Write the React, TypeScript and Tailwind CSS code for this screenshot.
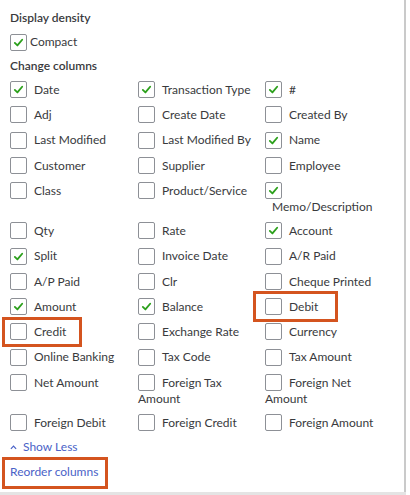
import React from 'react';

type Col = { label: string; checked?: boolean; mark?: 'credit' | 'debit' };

const columns: Col[] = [
  { label: 'Date', checked: true },
  { label: 'Transaction Type', checked: true },
  { label: '#', checked: true },
  { label: 'Adj' },
  { label: 'Create Date' },
  { label: 'Created By' },
  { label: 'Last Modified' },
  { label: 'Last Modified By' },
  { label: 'Name', checked: true },
  { label: 'Customer' },
  { label: 'Supplier' },
  { label: 'Employee' },
  { label: 'Class' },
  { label: 'Product/Service' },
  { label: 'Memo/Description', checked: true },
  { label: 'Qty' },
  { label: 'Rate' },
  { label: 'Account', checked: true },
  { label: 'Split', checked: true },
  { label: 'Invoice Date' },
  { label: 'A/R Paid' },
  { label: 'A/P Paid' },
  { label: 'Clr' },
  { label: 'Cheque Printed' },
  { label: 'Amount', checked: true },
  { label: 'Balance', checked: true },
  { label: 'Debit', mark: 'debit' },
  { label: 'Credit', mark: 'credit' },
  { label: 'Exchange Rate' },
  { label: 'Currency' },
  { label: 'Online Banking' },
  { label: 'Tax Code' },
  { label: 'Tax Amount' },
  { label: 'Net Amount' },
  { label: 'Foreign Tax Amount' },
  { label: 'Foreign Net Amount' },
  { label: 'Foreign Debit' },
  { label: 'Foreign Credit' },
  { label: 'Foreign Amount' },
];

const Box = ({ checked }: { checked?: boolean }) => (
  <span className="inline-flex h-[17px] w-[17px] items-center justify-center rounded-[2px] border border-[#8d9096] bg-white align-middle">
    {checked && (
      <svg width="11" height="11" viewBox="0 0 12 12">
        <path d="M2 6.5 L4.8 9.2 L10 3" fill="none" stroke="#2ca01c" strokeWidth="2" strokeLinecap="round" strokeLinejoin="round" />
      </svg>
    )}
  </span>
);

export default function App() {
  return (
    <div className="h-[495px] w-[410px] bg-white" style={{ fontFamily: 'Lato, "Open Sans", sans-serif' }}>
      <div className="h-[492px] w-[406px] border-r-2 border-[#cacaca] pl-[10px] pt-[9px] text-[12px] text-[#393a3d]">
        <div className="font-semibold leading-[18px]">Display density</div>
        <div className="mt-[6px] flex items-center gap-[3px] leading-[18px]">
          <Box checked />
          <span>Compact</span>
        </div>
        <div className="mt-[6px] font-semibold leading-[18px]">Change columns</div>

        <div className="mt-[6px] grid grid-cols-[128px_127px_127px] gap-y-[8.3px]">
          {columns.map((c) => (
            <div key={c.label} className="relative pr-[6px] leading-[13.5px]">
              {c.mark === 'credit' && (
                <span className="absolute left-[-8px] top-[-6px] h-[30px] w-[80px] border-[3px] border-[#d4541f]" />
              )}
              {c.mark === 'debit' && (
                <span className="absolute left-[-12px] top-[-7px] h-[31px] w-[85px] border-[3px] border-[#d4541f]" />
              )}
              <Box checked={c.checked} />
              <span className="ml-[7px] align-middle">{c.label}</span>
            </div>
          ))}
        </div>

        <div className="mt-[7px] flex items-center gap-[6px] leading-[18px] text-[#4a62c7]">
          <svg width="7" height="5" viewBox="0 0 8 5">
            <path d="M1 4 L4 1 L7 4" fill="none" stroke="#4a62c7" strokeWidth="1.4" />
          </svg>
          <span>Show Less</span>
        </div>
        <div className="relative mt-[7px] leading-[18px] text-[#4a62c7]">
          <span className="absolute left-[-8px] top-[-6px] h-[32px] w-[106px] border-[3px] border-[#d4541f]" />
          Reorder columns
        </div>
      </div>
      <div className="h-[3px] w-[406px] bg-[#e4e4e4]" />
    </div>
  );
}
